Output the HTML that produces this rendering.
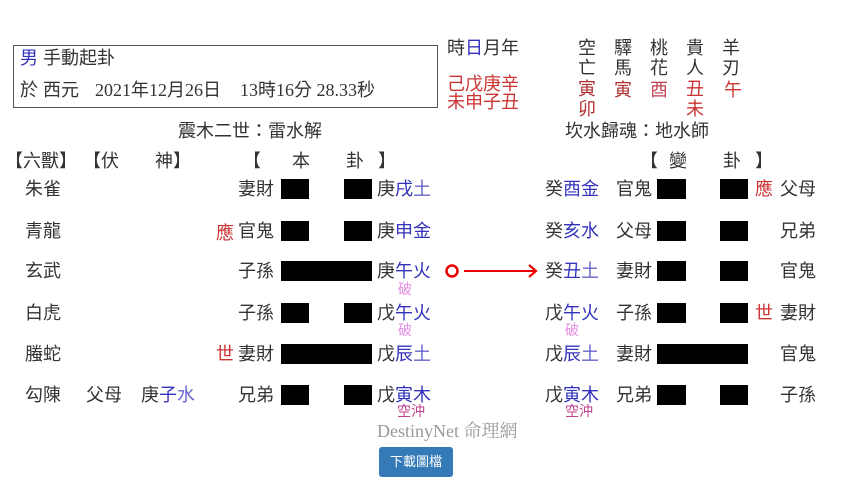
<!DOCTYPE html><html><head><meta charset="utf-8"><style>
body{margin:0;width:841px;height:498px;background:#fff;position:relative;overflow:hidden;font-family:"Liberation Sans","Noto Sans CJK TC",sans-serif;color:#333;font-size:18px}
.a{position:absolute;white-space:nowrap;line-height:22px}
.s{font-family:"Liberation Serif","Noto Sans CJK TC",serif}
.b{color:#3333bb}.l{color:#6666cc}.r{color:#cc3333}.p{color:#e48ae4;font-size:14px;line-height:14px}.k{color:#c04090;font-size:14px;line-height:14px}
.ln{position:absolute;background:#000;height:20px}
</style></head><body>
<div style="position:absolute;left:13px;top:45px;width:423px;height:61px;border:1px solid #555"></div>
<div class="a" style="left:20px;top:47px"><span class="b">男</span> 手動起卦</div>
<div class="a" style="left:20px;top:79px">於 西元</div>
<div class="a s" style="left:95px;top:79px">2021年12月26日</div>
<div class="a s" style="left:240px;top:79px">13時16分 28.33秒</div>
<div class="a" style="left:447px;top:37px">時<span class="b">日</span>月年</div>
<div class="a r" style="left:447px;top:75px;line-height:18px">己戊庚辛<br>未申子丑</div>
<div class="a" style="left:578px;top:38px;line-height:20px">空<br>亡</div>
<div class="a" style="left:614px;top:38px;line-height:20px">驛<br>馬</div>
<div class="a" style="left:650px;top:38px;line-height:20px">桃<br>花</div>
<div class="a" style="left:686px;top:38px;line-height:20px">貴<br>人</div>
<div class="a" style="left:722px;top:38px;line-height:20px">羊<br>刃</div>
<div class="a" style="left:578px;top:79px;line-height:20px;color:#b03030">寅<br>卯</div>
<div class="a" style="left:614px;top:79px;color:#b03030">寅</div>
<div class="a" style="left:650px;top:79px;color:#c04050">酉</div>
<div class="a r" style="left:686px;top:79px;line-height:20px">丑<br>未</div>
<div class="a r" style="left:724px;top:79px">午</div>
<div class="a" style="left:178px;top:120px">震木二世：雷水解</div>
<div class="a" style="left:565px;top:120px">坎水歸魂：地水師</div>
<div class="a" style="left:5px;top:150px">【六獸】</div>
<div class="a" style="left:83px;top:150px">【伏</div>
<div class="a" style="left:155px;top:150px">神】</div>
<div class="a" style="left:243px;top:150px">【</div><div class="a" style="left:292px;top:150px">本</div><div class="a" style="left:346px;top:150px">卦</div><div class="a" style="left:378px;top:150px">】</div>
<div class="a" style="left:640px;top:150px">【</div><div class="a" style="left:669px;top:150px">變</div><div class="a" style="left:723px;top:150px">卦</div><div class="a" style="left:755px;top:150px">】</div>

<div class="a" style="left:25px;top:178px">朱雀</div>
<div class="a" style="left:25px;top:220px">青龍</div>
<div class="a" style="left:25px;top:260px">玄武</div>
<div class="a" style="left:25px;top:302px">白虎</div>
<div class="a" style="left:25px;top:343px">螣蛇</div>
<div class="a" style="left:25px;top:384px">勾陳</div>
<div class="a" style="left:86px;top:384px">父母</div>
<div class="a" style="left:141px;top:384px">庚<span class="b">子</span><span class="l">水</span></div>

<div class="a r" style="left:216px;top:222px">應</div>
<div class="a r" style="left:216px;top:343px">世</div>
<div class="a" style="left:238px;top:178px">妻財</div>
<div class="a" style="left:238px;top:220px">官鬼</div>
<div class="a" style="left:238px;top:260px">子孫</div>
<div class="a" style="left:238px;top:302px">子孫</div>
<div class="a" style="left:238px;top:343px">妻財</div>
<div class="a" style="left:238px;top:384px">兄弟</div>

<div class="ln" style="left:281px;top:179px;width:28px"></div><div class="ln" style="left:344px;top:179px;width:28px"></div>
<div class="ln" style="left:281px;top:221px;width:28px"></div><div class="ln" style="left:344px;top:221px;width:28px"></div>
<div class="ln" style="left:281px;top:261px;width:91px"></div>
<div class="ln" style="left:281px;top:303px;width:28px"></div><div class="ln" style="left:344px;top:303px;width:28px"></div>
<div class="ln" style="left:281px;top:344px;width:91px"></div>
<div class="ln" style="left:281px;top:385px;width:28px"></div><div class="ln" style="left:344px;top:385px;width:28px"></div>

<div class="a" style="left:377px;top:178px">庚<span class="b">戌</span><span class="l">土</span></div>
<div class="a" style="left:377px;top:220px">庚<span class="b">申</span><span class="b">金</span></div>
<div class="a" style="left:377px;top:260px">庚<span class="b">午</span><span class="b">火</span></div>
<div class="a p" style="left:398px;top:282px">破</div>
<div class="a" style="left:377px;top:302px">戊<span class="b">午</span><span class="b">火</span></div>
<div class="a p" style="left:398px;top:323px">破</div>
<div class="a" style="left:377px;top:343px">戊<span class="b">辰</span><span class="l">土</span></div>
<div class="a" style="left:377px;top:384px">戊<span class="b">寅</span><span class="b">木</span></div>
<div class="a k" style="left:397px;top:404px">空沖</div>

<svg style="position:absolute;left:440px;top:260px" width="100" height="22"><circle cx="12" cy="11" r="5.5" fill="none" stroke="#e00" stroke-width="2.5"/><line x1="24" y1="11" x2="96" y2="11" stroke="#e00" stroke-width="2"/><polyline points="89,5 96,11 89,17" fill="none" stroke="#e00" stroke-width="2.2"/></svg>

<div class="a" style="left:545px;top:178px">癸<span class="b">酉</span><span class="b">金</span></div>
<div class="a" style="left:545px;top:220px">癸<span class="b">亥</span><span class="b">水</span></div>
<div class="a" style="left:545px;top:260px">癸<span class="b">丑</span><span class="l">土</span></div>
<div class="a" style="left:545px;top:302px">戊<span class="b">午</span><span class="b">火</span></div>
<div class="a p" style="left:565px;top:323px">破</div>
<div class="a" style="left:545px;top:343px">戊<span class="b">辰</span><span class="l">土</span></div>
<div class="a" style="left:545px;top:384px">戊<span class="b">寅</span><span class="b">木</span></div>
<div class="a k" style="left:565px;top:404px">空沖</div>

<div class="a" style="left:616px;top:178px">官鬼</div>
<div class="a" style="left:616px;top:220px">父母</div>
<div class="a" style="left:616px;top:260px">妻財</div>
<div class="a" style="left:616px;top:302px">子孫</div>
<div class="a" style="left:616px;top:343px">妻財</div>
<div class="a" style="left:616px;top:384px">兄弟</div>

<div class="ln" style="left:657px;top:179px;width:29px"></div><div class="ln" style="left:720px;top:179px;width:28px"></div>
<div class="ln" style="left:657px;top:221px;width:29px"></div><div class="ln" style="left:720px;top:221px;width:28px"></div>
<div class="ln" style="left:657px;top:261px;width:29px"></div><div class="ln" style="left:720px;top:261px;width:28px"></div>
<div class="ln" style="left:657px;top:303px;width:29px"></div><div class="ln" style="left:720px;top:303px;width:28px"></div>
<div class="ln" style="left:657px;top:344px;width:91px"></div>
<div class="ln" style="left:657px;top:385px;width:29px"></div><div class="ln" style="left:720px;top:385px;width:28px"></div>

<div class="a r" style="left:755px;top:178px">應</div>
<div class="a r" style="left:755px;top:302px">世</div>
<div class="a" style="left:780px;top:178px">父母</div>
<div class="a" style="left:780px;top:220px">兄弟</div>
<div class="a" style="left:780px;top:260px">官鬼</div>
<div class="a" style="left:780px;top:302px">妻財</div>
<div class="a" style="left:780px;top:343px">官鬼</div>
<div class="a" style="left:780px;top:384px">子孫</div>

<div class="a" style="left:377px;top:420px;color:#999;font-family:'Liberation Serif','Noto Serif CJK SC',serif;font-size:18px">DestinyNet 命理網</div>
<div style="position:absolute;left:379px;top:447px;width:74px;height:30px;background:#337ab7;border-radius:3px;color:#fff;font-size:13px;line-height:30px;text-align:center">下載圖檔</div>
</body></html>
